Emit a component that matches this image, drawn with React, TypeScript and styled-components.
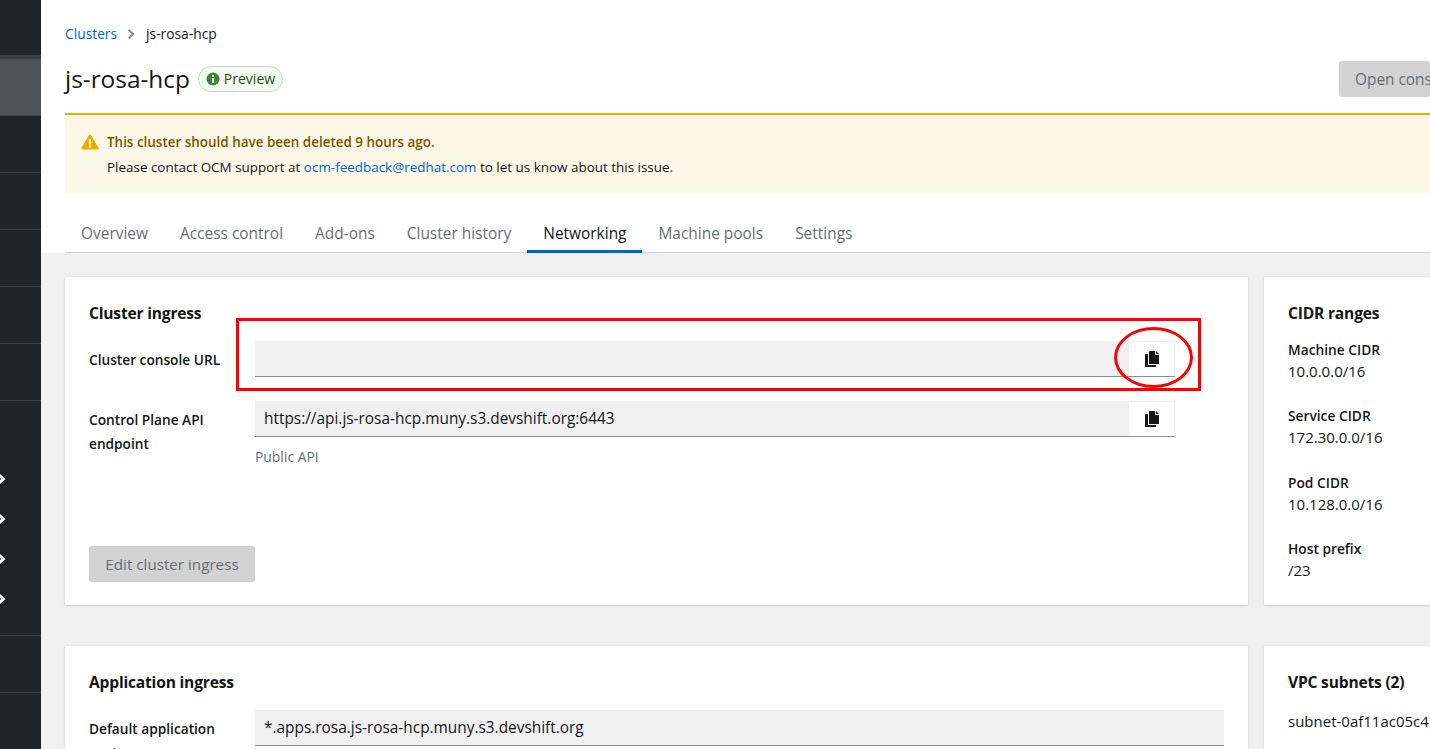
import React from "react";
import styled, { createGlobalStyle } from "styled-components";

const Global = createGlobalStyle`
  html, body { margin: 0; padding: 0; height: 100%; overflow: hidden; background: #f0f0f0; }
  #root { height: 100%; }
  * { box-sizing: border-box; }
`;

const Page = styled.div`
  position: relative;
  display: flex;
  width: 1430px;
  height: 749px;
  overflow: hidden;
  font-family: "Open Sans", "Noto Sans", sans-serif;
  font-size: 14px;
  color: #151515;
`;

const Sidebar = styled.nav`
  flex: 0 0 41px;
  min-width: 0;
  background: #212427;
  display: flex;
  flex-direction: column;
`;

const NavTop = styled.div`
  flex: 0 0 59px;
  border-bottom: 4px solid #3c3f42;
`;

const NavItem = styled.div<{ $active?: boolean }>`
  flex: 0 0 57px;
  background: ${(p) => (p.$active ? "#4f5255" : "transparent")};
  border-bottom: 1px solid #3c3f42;
`;

const NavGroup = styled.div`
  flex: 0 0 235px;
  padding-top: 58px;
  border-bottom: 1px solid #3c3f42;
`;

const NavExpander = styled.div`
  height: 40px;
  display: flex;
  align-items: center;
  justify-content: flex-end;
  padding-right: 35px;
  color: #fff;
`;

const Main = styled.main`
  flex: 1;
  min-width: 0;
  display: flex;
  flex-direction: column;
`;

const Header = styled.header`
  background: #fff;
  flex: 0 0 253px;
  padding: 0 0 0 24px;
  display: flex;
  flex-direction: column;
`;

const Breadcrumb = styled.div`
  display: flex;
  align-items: center;
  height: 20px;
  margin-top: 24px;
  font-size: 13.8px;
  line-height: 20px;
`;

const CrumbLink = styled.a`
  color: #0066cc;
`;

const CrumbSep = styled.span`
  display: flex;
  margin: 0 11px;
  color: #8a8d90;
`;

const TitleRow = styled.div`
  display: flex;
  align-items: center;
  height: 51px;
  margin-top: 9px;
`;

const Title = styled.h1`
  margin: 0;
  font-size: 24.4px;
  font-weight: 400;
  line-height: 30px;
`;

const Badge = styled.span`
  display: inline-flex;
  align-items: center;
  gap: 4px;
  height: 26px;
  margin-left: 8px;
  padding: 0 7px;
  border: 1px solid #bde2b9;
  border-radius: 13px;
  background: #f3faf2;
  color: #1e4f18;
  font-size: 14px;
`;

const OpenButton = styled.div`
  margin-left: auto;
  width: 91px;
  height: 36px;
  flex: none;
  padding: 0 0 0 16px;
  background: #d2d2d2;
  border-radius: 3px;
  color: #6a6e73;
  font-size: 15.4px;
  line-height: 38px;
  white-space: nowrap;
  overflow: hidden;
`;

const Alert = styled.div`
  height: 80px;
  margin-top: 9px;
  flex: none;
  border-top: 2px solid #f0ab00;
  background: #fdf7e7;
  display: flex;
  padding: 17px 0 0 16px;
`;

const AlertIcon = styled.span`
  display: flex;
  width: 26px;
  flex: none;
  padding-top: 2px;
  color: #f0ab00;
`;

const AlertBody = styled.div`
  font-size: 13.45px;
  line-height: 20px;
  color: #151515;
`;

const AlertTitle = styled.div`
  color: #795600;
  font-weight: 600;
  margin-bottom: 5px;
`;

const Mail = styled.a`
  color: #0066cc;
`;

const Tabs = styled.div`
  display: flex;
  margin-top: 20px;
  height: 40px;
  flex: none;
  border-bottom: 1px solid #d2d2d2;
`;

const Tab = styled.div<{ $active?: boolean }>`
  padding: 0 16px;
  height: 40px;
  line-height: 40px;
  font-size: 15.45px;
  color: ${(p) => (p.$active ? "#151515" : "#6a6e73")};
  border-bottom: 3px solid ${(p) => (p.$active ? "#0066cc" : "transparent")};
`;

const Grid = styled.div`
  display: grid;
  grid-template-columns: 1183px 300px;
  column-gap: 16px;
  row-gap: 41px;
  padding: 24px 0 0 24px;
`;

const Card = styled.section<{ $h: number }>`
  background: #fff;
  height: ${(p) => p.$h}px;
  padding: 24px 24px 23px;
  box-shadow: 0 1px 2px rgba(3, 3, 3, 0.12), 0 0 2px rgba(3, 3, 3, 0.06);
  display: flex;
  flex-direction: column;
`;

const CardTitle = styled.h2`
  margin: 0;
  font-size: 15.6px;
  font-weight: 700;
  line-height: 24px;
  letter-spacing: -0.2px;
`;

const FieldList = styled.div<{ $mt: number }>`
  display: flex;
  flex-direction: column;
  gap: 24px;
  margin-top: ${(p) => p.$mt}px;
`;

const Field = styled.div<{ $w: number }>`
  display: grid;
  grid-template-columns: 166px ${(p) => p.$w}px;
`;

const FieldLabel = styled.div`
  font-size: 13.7px;
  font-weight: 600;
  line-height: 24px;
  padding-top: 7px;
  padding-right: 20px;
`;

const InputGroup = styled.div`
  display: flex;
  height: 36px;
`;

const InputValue = styled.div`
  flex: 1;
  background: #f0f0f0;
  border-bottom: 1px solid #8a8d90;
  padding: 0 9px;
  font-size: 15.4px;
  line-height: 36px;
  color: #151515;
`;

const CopyButton = styled.div`
  flex: 0 0 46px;
  display: flex;
  align-items: center;
  justify-content: center;
  padding-left: 2px;
  border: 1px solid #f0f0f0;
  border-bottom: 1px solid #8a8d90;
  border-left: none;
  color: #151515;
`;

const Help = styled.div`
  font-size: 13.9px;
  line-height: 20px;
  color: #6a6e73;
  margin-top: 10px;
`;

const EditButton = styled.div`
  width: 166px;
  height: 36px;
  margin-top: auto;
  background: #d2d2d2;
  border-radius: 3px;
  color: #6a6e73;
  font-size: 15.2px;
  line-height: 36px;
  text-align: center;
`;

const CidrList = styled.div`
  margin-top: 15px;
`;

const Term = styled.div`
  font-size: 13.75px;
  font-weight: 600;
  line-height: 20px;
`;

const Value = styled.div`
  font-size: 15px;
  line-height: 22px;
  margin-bottom: 24.33px;
  white-space: nowrap;
`;

const SubnetList = styled.div`
  display: flex;
  flex-direction: column;
  gap: 11px;
  margin-top: 15px;
`;

const Subnet = styled.div`
  font-size: 15px;
  line-height: 24px;
  white-space: nowrap;
`;

const RedBox = styled.div`
  position: absolute;
  left: 236px;
  top: 318px;
  width: 965px;
  height: 73px;
  border: 3px solid #ff0000;
`;

const RedCircle = styled.div`
  position: absolute;
  left: 1114px;
  top: 327px;
  width: 79px;
  height: 61px;
  border: 3px solid #ff0000;
  border-radius: 50%;
`;

const Chevron = () => (
  <svg width="9" height="12" viewBox="0 0 9 12" fill="currentColor" style={{ flex: "none" }}>
    <path d="M2 0 8.5 6 2 12 0 10 4.2 6 0 2z" />
  </svg>
);

const CopyIcon = () => (
  <svg width="15" height="16" viewBox="0 0 15 16" fill="currentColor">
    <path d="M5 0h5v4h4v9H4V1a1 1 0 0 1 1-1z" />
    <path d="M11 0l3 3h-3z" />
    <path d="M0 4a1 1 0 0 1 1-1h2v11h8v1a1 1 0 0 1-1 1H1a1 1 0 0 1-1-1z" />
  </svg>
);

const InfoIcon = () => (
  <svg width="14" height="14" viewBox="0 0 14 14">
    <circle cx="7" cy="7" r="6.5" fill="#3e8635" />
    <rect x="6" y="3" width="2" height="2" fill="#fff" />
    <rect x="6" y="6" width="2" height="5" fill="#fff" />
  </svg>
);

const WarnIcon = () => (
  <svg width="18" height="16" viewBox="0 0 18 16">
    <path d="M9 0.5c.5 0 .9.3 1.1.7l7.5 12.9c.4.7-.1 1.5-.9 1.5H1.3c-.8 0-1.3-.8-.9-1.5L7.9 1.2C8.1.8 8.5.5 9 .5z" fill="#f0ab00" />
    <rect x="8" y="5" width="2" height="5.5" fill="#fff" />
    <rect x="8" y="11.5" width="2" height="2" fill="#fff" />
  </svg>
);

const CrumbChevron = () => (
  <svg width="7" height="10" viewBox="0 0 7 10" fill="currentColor">
    <path d="M1.5 0 6.5 5 1.5 10 0 8.5 3.5 5 0 1.5z" />
  </svg>
);

const tabs = ["Overview", "Access control", "Add-ons", "Cluster history", "Networking", "Machine pools", "Settings"];
const cidr = [
  ["Machine CIDR", "10.0.0.0/16"],
  ["Service CIDR", "172.30.0.0/16"],
  ["Pod CIDR", "10.128.0.0/16"],
  ["Host prefix", "/23"],
];

export default function App() {
  return (
    <Page>
      <Global />
      <Sidebar>
        <NavTop />
        <NavItem $active />
        <NavItem />
        <NavItem />
        <NavItem />
        <NavItem />
        <NavItem />
        <NavGroup>
          <NavExpander><Chevron /></NavExpander>
          <NavExpander><Chevron /></NavExpander>
          <NavExpander><Chevron /></NavExpander>
          <NavExpander><Chevron /></NavExpander>
        </NavGroup>
        <NavItem />
      </Sidebar>
      <Main>
        <Header>
          <Breadcrumb>
            <CrumbLink>Clusters</CrumbLink>
            <CrumbSep><CrumbChevron /></CrumbSep>
            <span>js-rosa-hcp</span>
          </Breadcrumb>
          <TitleRow>
            <Title>js-rosa-hcp</Title>
            <Badge><InfoIcon />Preview</Badge>
            <OpenButton>Open console</OpenButton>
          </TitleRow>
          <Alert>
            <AlertIcon><WarnIcon /></AlertIcon>
            <AlertBody>
              <AlertTitle>This cluster should have been deleted 9 hours ago.</AlertTitle>
              <div>Please contact OCM support at <Mail>ocm-feedback@redhat.com</Mail> to let us know about this issue.</div>
            </AlertBody>
          </Alert>
          <Tabs>
            {tabs.map((t) => (
              <Tab key={t} $active={t === "Networking"}>{t}</Tab>
            ))}
          </Tabs>
        </Header>
        <Grid>
          <Card $h={328}>
            <CardTitle>Cluster ingress</CardTitle>
            <FieldList $mt={16}>
              <Field $w={920}>
                <FieldLabel>Cluster console URL</FieldLabel>
                <InputGroup>
                  <InputValue />
                  <CopyButton><CopyIcon /></CopyButton>
                </InputGroup>
              </Field>
              <Field $w={920}>
                <FieldLabel>Control Plane API endpoint</FieldLabel>
                <div>
                  <InputGroup>
                    <InputValue>https://api.js-rosa-hcp.muny.s3.devshift.org:6443</InputValue>
                    <CopyButton><CopyIcon /></CopyButton>
                  </InputGroup>
                  <Help>Public API</Help>
                </div>
              </Field>
            </FieldList>
            <EditButton>Edit cluster ingress</EditButton>
          </Card>
          <Card $h={328}>
            <CardTitle>CIDR ranges</CardTitle>
            <CidrList>
              {cidr.map(([k, v]) => (
                <div key={k}>
                  <Term>{k}</Term>
                  <Value>{v}</Value>
                </div>
              ))}
            </CidrList>
          </Card>
          <Card $h={300}>
            <CardTitle>Application ingress</CardTitle>
            <FieldList $mt={16}>
              <Field $w={969}>
                <FieldLabel>Default application router</FieldLabel>
                <InputGroup>
                  <InputValue>*.apps.rosa.js-rosa-hcp.muny.s3.devshift.org</InputValue>
                </InputGroup>
              </Field>
            </FieldList>
          </Card>
          <Card $h={300}>
            <CardTitle>VPC subnets (2)</CardTitle>
            <SubnetList>
              <Subnet>subnet-0af11ac05c4</Subnet>
              <Subnet>subnet-0af11ac05c5</Subnet>
            </SubnetList>
          </Card>
        </Grid>
      </Main>
      <RedBox />
      <RedCircle />
    </Page>
  );
}
